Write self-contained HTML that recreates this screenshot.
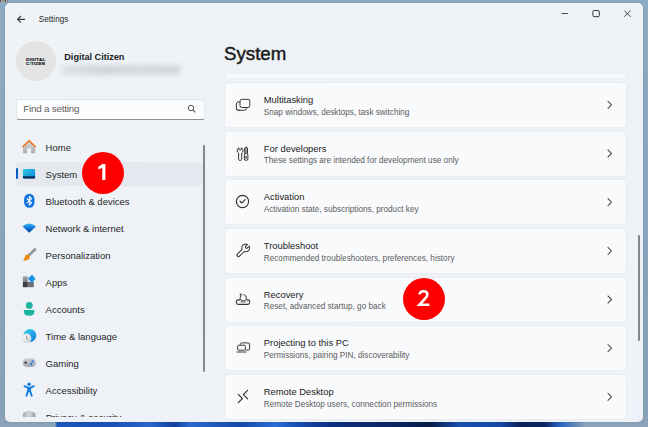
<!DOCTYPE html>
<html><head><meta charset="utf-8">
<style>
*{margin:0;padding:0;box-sizing:border-box}
html,body{width:648px;height:427px;overflow:hidden}
body{position:relative;background:linear-gradient(180deg,#8cabc3 0,#87a4bc 60%,#8aa2b6 100%);font-family:"Liberation Sans",sans-serif;color:#1b1b1b}
.abs{position:absolute}
.t{position:absolute;white-space:nowrap;line-height:1}
#wall{left:0;top:418px;width:648px;height:9px;background:linear-gradient(90deg,#8aa3b9 0,#8aa3b9 55px,#1d56bc 57px,#1a4fb4 110px,#2a66cc 150px,#123f9e 175px,#2c6ad0 190px,#1748a8 240px,#2b6fd8 275px,#184ab0 300px,#0d2f80 330px,#0a245e 400px,#081b48 430px,#1a4fb0 460px,#1748a8 500px,#0a2258 520px,#0b2660 545px,#2a63c4 560px,#5d86b8 575px,#8aa3b9 585px)}
#win{left:5px;top:3px;width:638px;height:419px;border-radius:5px;background:linear-gradient(160deg,#eef3f7 0,#eef2f7 40%,#eff3f9 100%);overflow:hidden;box-shadow:0 0 1.5px rgba(40,60,80,0.35)}
.nav{font-size:9.5px;color:#262626}
.card{position:absolute;left:224px;width:402.6px;height:46px;background:#f9fafc;border:1px solid #e9ecf1;border-radius:4px}
.ct{position:absolute;left:38.8px;top:12.1px;font-size:9.4px;line-height:1;white-space:nowrap;color:#1b1b1b}
.cs{position:absolute;left:38.8px;top:25.7px;font-size:8.2px;line-height:1;white-space:nowrap;color:#5c5c5c}
.chev{position:absolute;left:382px;top:17.5px}
.ci{position:absolute;left:-1px;top:-1px}
.badge{position:absolute;width:42.5px;height:42.5px;border-radius:50%;background:#fe0000;color:#fff;font-size:22px;font-weight:bold;text-align:center;line-height:42.5px}
</style></head><body>
<div id="wall" class="abs"></div>
<div id="win" class="abs"></div>
<div class="abs" style="left:0;top:0;width:8px;height:2px;opacity:0.75;background:linear-gradient(90deg,#6a2020 0,#6a2020 1px,#8fb0d0 1px,#8fb0d0 2px,#c08040 2px,#c08040 3px,#90b0d0 3px,#b09040 4px,#b09040 5px,#202060 5px,#202060 6px,#c0d0e0 6px,#c0d0e0 7px,#906040 7px)"></div>

<!-- title bar -->
<svg class="abs" style="left:0;top:0" width="648" height="30">
  <path d="M17.6 19.3 H25 M20.9 16 L17.6 19.3 L20.9 22.6" fill="none" stroke="#3a3a3a" stroke-width="1.15"/>
  <path d="M561.6 13.5 H568.1" stroke="#333" stroke-width="0.9"/>
  <rect x="592.9" y="10.5" width="6.4" height="6.2" rx="1.3" fill="none" stroke="#333" stroke-width="1"/>
  <path d="M624.3 10.6 L630.5 16.8 M630.5 10.6 L624.3 16.8" stroke="#333" stroke-width="0.9"/>
</svg>
<div class="t" style="left:38.8px;top:16px;font-size:8.2px;color:#2a2a2a">Settings</div>

<!-- profile -->
<div class="abs" style="left:15.8px;top:41px;width:40px;height:40px;border-radius:50%;background:#e4e4e4"></div>
<div class="t" style="left:26.1px;top:57.5px;font-size:4.4px;font-weight:bold;color:#222;letter-spacing:0.3px;-webkit-text-stroke:0.2px #222">DIGITAL</div>
<div class="t" style="left:26.1px;top:62.4px;font-size:4.4px;font-weight:bold;color:#222;letter-spacing:0.3px;-webkit-text-stroke:0.2px #222">C<span style="color:#2aa3e6;-webkit-text-stroke:0.2px #2aa3e6">I</span>TIZEN</div>
<div class="t" style="left:64.3px;top:53.3px;font-size:9.1px;font-weight:bold;color:#1b1b1b">Digital Citizen</div>
<div class="abs" style="left:62px;top:65px;width:118px;height:10px;border-radius:3px;background:linear-gradient(90deg,#dfe3e8,#d2d6db 35%,#d6dade 65%,#d3d7dc);filter:blur(2px)"></div>

<!-- search -->
<div class="abs" style="left:16.2px;top:98.8px;width:188.6px;height:21px;background:#fbfcfd;border:1px solid #e3e6ea;border-bottom:1px solid #8e8e8e;border-radius:3px"></div>
<div class="t" style="left:23.2px;top:104px;font-size:9.8px;letter-spacing:-0.2px;color:#5f5f5f">Find a setting</div>
<svg class="abs" style="left:180px;top:98px" width="24" height="22">
  <circle cx="11" cy="10" r="2.7" fill="none" stroke="#555" stroke-width="1"/>
  <path d="M13 12 L15.3 14.3" stroke="#555" stroke-width="1.1"/>
</svg>

<!-- nav selected -->
<div class="abs" style="left:16px;top:162px;width:187px;height:24px;background:#e5e9ef;border-radius:4px"></div>
<div class="abs" style="left:16px;top:168.4px;width:2.2px;height:10.5px;background:#0a5fc6;border-radius:1.1px"></div>
<!-- sidebar scrollbar -->
<div class="abs" style="left:203.1px;top:144.5px;width:2px;height:227.7px;background:#868686;border-radius:1px"></div>

<div class="t nav" style="left:45.6px;top:143.3px">Home</div>
<div class="t nav" style="left:45.6px;top:170.3px">System</div>
<div class="t nav" style="left:45.6px;top:197.3px">Bluetooth &amp; devices</div>
<div class="t nav" style="left:45.6px;top:224.3px">Network &amp; internet</div>
<div class="t nav" style="left:45.6px;top:251.3px">Personalization</div>
<div class="t nav" style="left:45.6px;top:278.3px">Apps</div>
<div class="t nav" style="left:45.6px;top:305.3px">Accounts</div>
<div class="t nav" style="left:45.6px;top:332.3px">Time &amp; language</div>
<div class="t nav" style="left:45.6px;top:359.3px">Gaming</div>
<div class="t nav" style="left:45.6px;top:386.3px">Accessibility</div>
<div class="abs" style="left:0;top:405px;width:210px;height:12px;overflow:hidden">
  <div class="t nav" style="left:45.7px;top:7.9px">Privacy &amp; security</div>
</div>

<!-- nav icons -->
<svg class="abs" style="left:0;top:130px" width="45" height="290">
  <defs>
    <linearGradient id="gHouse" x1="0" y1="0" x2="0" y2="1"><stop offset="0" stop-color="#d9dadc"/><stop offset="1" stop-color="#a9abae"/></linearGradient>
    <linearGradient id="gSys" x1="0" y1="0" x2="1" y2="1"><stop offset="0" stop-color="#30cbe6"/><stop offset="1" stop-color="#0d84d8"/></linearGradient>
    <linearGradient id="gWifi" x1="0" y1="0" x2="0" y2="1"><stop offset="0" stop-color="#3ab8f2"/><stop offset="0.5" stop-color="#1176d6"/><stop offset="1" stop-color="#0a3b97"/></linearGradient>
    <linearGradient id="gBrush" x1="0" y1="0" x2="1" y2="1"><stop offset="0" stop-color="#7d848c"/><stop offset="1" stop-color="#a6adb4"/></linearGradient>
    <linearGradient id="gPad" x1="0" y1="0" x2="0" y2="1"><stop offset="0" stop-color="#cdd0d4"/><stop offset="1" stop-color="#a3a7ac"/></linearGradient>
    <linearGradient id="gShield" x1="0" y1="0" x2="1" y2="0"><stop offset="0" stop-color="#a7abb0"/><stop offset="0.5" stop-color="#d4d7da"/><stop offset="1" stop-color="#9a9ea3"/></linearGradient>
    <linearGradient id="gApps" x1="0" y1="0" x2="0" y2="1"><stop offset="0" stop-color="#a3a8ae"/><stop offset="1" stop-color="#7b8087"/></linearGradient>
    <linearGradient id="gGlobe" x1="0" y1="0" x2="1" y2="1"><stop offset="0.25" stop-color="#30c0e8"/><stop offset="0.75" stop-color="#1a8ee0"/><stop offset="1" stop-color="#1572d4"/></linearGradient>
    <radialGradient id="gClock" cx="0.4" cy="0.35" r="0.7"><stop offset="0" stop-color="#fafafa"/><stop offset="1" stop-color="#cfd1d4"/></radialGradient>
  </defs>
  <!-- Home (page y 134..160 => local 4..30) -->
  <g transform="translate(18,4)">
    <path d="M5 12.8 L11.1 7 L17.2 12.8 L17.2 19.2 L13.1 19.2 L13.1 14.3 L9.1 14.3 L9.1 19.2 L5 19.2 Z" fill="url(#gHouse)"/>
    <path d="M4.8 12.8 L11.1 6.7 L17.4 12.8" fill="none" stroke="#f06d10" stroke-width="1.45" stroke-linejoin="round" stroke-linecap="round"/>
  </g>
  <!-- System -->
  <g transform="translate(18,31)">
    <rect x="4.9" y="7.9" width="12.2" height="9.5" rx="1.2" fill="url(#gSys)"/>
    <path d="M4.9 15.2 H17.1 V16.2 Q17.1 17.4 15.9 17.4 H6.1 Q4.9 17.4 4.9 16.2 Z" fill="#0b2c57"/>
  </g>
  <!-- Bluetooth -->
  <g transform="translate(18,58)">
    <rect x="6.1" y="5.8" width="10.4" height="14" rx="5.2" fill="#1174e0"/>
    <path d="M8.7 10.5 L13.7 14.9 L11.3 17.1 L11.3 8.5 L13.7 10.7 L8.7 15.1" fill="none" stroke="#fff" stroke-width="1.05" stroke-linejoin="round"/>
  </g>
  <!-- Network -->
  <g transform="translate(18,85)">
    <path d="M4.5 11.4 Q11.2 5.6 18 11.4 L11.2 17.8 Z" fill="url(#gWifi)"/>
  </g>
  <!-- Personalization -->
  <g transform="translate(18,112)">
    <path d="M16.9 7.4 L10.9 13.4" stroke="url(#gBrush)" stroke-width="2.8" stroke-linecap="round"/>
    <path d="M9.2 12.6 Q12.2 13.4 11.8 16.1 Q10.8 18.6 5 18.8 Q6.4 17.4 6.6 15.4 Q7.1 12.9 9.2 12.6 Z" fill="#f28a12"/>
  </g>
  <!-- Apps -->
  <g transform="translate(18,139)">
    <rect x="4.9" y="7.3" width="4.9" height="5.5" fill="url(#gApps)"/>
    <rect x="4.9" y="12.8" width="4.9" height="5.4" fill="#3b3e43"/>
    <rect x="9.8" y="12.8" width="6" height="5.4" fill="#6c7178"/>
    <path d="M13.7 6 Q14 5.8 14.3 6 L17.3 9.4 Q17.5 9.75 17.3 10.1 L14.3 13.5 Q14 13.7 13.7 13.5 L10.2 10.1 Q10 9.75 10.2 9.4 Z" fill="#1a8fe8"/>
  </g>
  <!-- Accounts -->
  <g transform="translate(18,166)">
    <circle cx="11.3" cy="9.4" r="3.4" fill="#1db3a1"/>
    <path d="M5.8 15.2 Q5.8 14 7 14 H15.3 Q16.5 14 16.5 15.2 Q16.5 19.8 11.15 19.8 Q5.8 19.8 5.8 15.2 Z" fill="#1db3a1"/>
  </g>
  <!-- Time & language -->
  <g transform="translate(18,193)">
    <circle cx="11.9" cy="12.5" r="6.4" fill="url(#gGlobe)"/>
    <circle cx="8.8" cy="15.2" r="4.6" fill="url(#gClock)"/>
    <path d="M8.5 12.6 V15.4 L10.3 16.4" fill="none" stroke="#777" stroke-width="0.8"/>
  </g>
  <!-- Gaming -->
  <g transform="translate(18,220)">
    <rect x="4.6" y="8.2" width="13.4" height="8.9" rx="4.45" fill="url(#gPad)"/>
    <path d="M7.6 11.2 V14 M6.2 12.6 H9" stroke="#44474c" stroke-width="1"/>
    <circle cx="14.6" cy="11.4" r="1.15" fill="#1a7fe2"/>
    <circle cx="13.1" cy="14" r="1.15" fill="#1a7fe2"/>
  </g>
  <!-- Accessibility -->
  <g transform="translate(18,247)">
    <circle cx="11.1" cy="7.2" r="1.8" fill="#1681e0"/>
    <path d="M6.5 9.1 L9.4 10.6 H12.8 L15.7 9.1" fill="none" stroke="#1681e0" stroke-width="1.9" stroke-linecap="round" stroke-linejoin="round"/>
    <rect x="9.2" y="10" width="3.8" height="5" rx="0.8" fill="#1681e0"/>
    <path d="M10.1 14 L8.5 18.7 M12.1 14 L13.7 18.7" fill="none" stroke="#1681e0" stroke-width="2" stroke-linecap="round"/>
  </g>
  <!-- Privacy (clipped) -->
  <g transform="translate(18,274)">
    <path d="M5 8.9 L11.1 6.5 L17.3 8.9 V13 H5 Z" fill="url(#gShield)"/>
  </g>
</svg>

<!-- main title -->
<div class="t" style="left:224px;top:44.9px;font-size:18.7px;color:#1a1a1a;-webkit-text-stroke:0.45px #1a1a1a">System</div>

<!-- cards clip -->
<div class="abs" style="left:216px;top:74px;width:420px;height:348px;overflow:hidden">
  <div class="card" style="left:8px;top:-40.8px"></div>
</div>

<div class="card" style="top:82px">
  <svg class="ci" width="40" height="45" viewBox="224 82 40 45">
    <path d="M240.5 110.3 H238.4 Q236.4 110.3 236.4 108.3 V104 Q236.4 102 238.4 102 H240" fill="none" stroke="#3a3a3a" stroke-width="1"/>
    <path d="M236.4 108 Q236.4 110.3 238.6 110.3 H244.4 Q246.4 110.3 246.4 108.3 V107.5" fill="none" stroke="#3a3a3a" stroke-width="1"/>
    <rect x="240" y="99.3" width="9.8" height="8.2" rx="1.8" fill="none" stroke="#3a3a3a" stroke-width="1"/>
  </svg>
  <div class="ct">Multitasking</div><div class="cs">Snap windows, desktops, task switching</div>
</div>
<div class="card" style="top:130.67px">
  <svg class="ci" width="40" height="45" viewBox="224 130.7 40 45">
    <g transform="translate(230,140)">
      <path d="M8.9 7.5 V8.7 Q8.9 9.9 10.1 9.9 Q11.3 9.9 11.3 8.7 V7.5 Q13.1 8.3 13.1 10.2 Q13.1 11.9 11.7 12.7 V19.2 Q11.7 20.1 10.2 20.1 Q8.6 20.1 8.6 19.2 V12.7 Q7.1 11.9 7.1 10.2 Q7.1 8.3 8.9 7.5 Z" fill="none" stroke="#333" stroke-width="1" stroke-linejoin="round"/>
      <path d="M14.7 13.3 V8.4 Q14.7 6.9 16.1 6.9 Q17.5 6.9 17.5 8.4 V13.3" fill="#9a9a9a" stroke="#333" stroke-width="1"/>
      <rect x="14.4" y="13.3" width="3.5" height="6.8" rx="1.5" fill="none" stroke="#333" stroke-width="1"/>
      <rect x="15.5" y="15.7" width="1.3" height="2.6" rx="0.6" fill="none" stroke="#444" stroke-width="0.8"/>
    </g>
  </svg>
  <div class="ct">For developers</div><div class="cs">These settings are intended for development use only</div>
</div>
<div class="card" style="top:179.33px">
  <svg class="ci" width="40" height="45" viewBox="224 179.3 40 45">
    <circle cx="242.5" cy="201.8" r="6.1" fill="none" stroke="#333" stroke-width="1.15"/>
    <path d="M240 201.5 L241.6 203.3 L245.2 200" fill="none" stroke="#333" stroke-width="1.15" stroke-linecap="round" stroke-linejoin="round"/>
  </svg>
  <div class="ct">Activation</div><div class="cs">Activation state, subscriptions, product key</div>
</div>
<div class="card" style="top:228px">
  <svg class="ci" width="40" height="45" viewBox="224 228 40 45">
    <g transform="translate(245.7,247.9) rotate(45)">
      <path d="M-1.2 -3.7 A3.9 3.9 0 0 0 -1.45 3.62 L-1.45 10.2 A1.45 1.45 0 0 0 1.45 10.2 L1.45 3.62 A3.9 3.9 0 0 0 1.2 -3.7 L1.2 -1.3 A1.2 1.2 0 0 1 -1.2 -1.3 Z" fill="none" stroke="#333" stroke-width="1" stroke-linejoin="round"/>
    </g>
  </svg>
  <div class="ct">Troubleshoot</div><div class="cs">Recommended troubleshooters, preferences, history</div>
</div>
<div class="card" style="top:276.67px">
  <svg class="ci" width="40" height="45" viewBox="224 276.7 40 45">
    <g transform="translate(230,286)">
      <path d="M10.3 13.6 H8.2 Q6.4 13.6 6.4 15.4 V16.3 Q6.4 18.1 8.2 18.1 H17.8 Q19.6 18.1 19.6 16.3 V15.4 Q19.6 13.6 17.8 13.6 H16.3" fill="none" stroke="#333" stroke-width="1.1"/>
      <path d="M10.8 9.6 A3.1 3.1 0 1 0 13.3 8.4" fill="none" stroke="#333" stroke-width="1"/>
      <path d="M9.3 8.4 L11.4 6.6 L11.6 10 Z" fill="#333"/>
      <path d="M10.6 15.3 Q13.2 16.3 15.8 15.3" fill="none" stroke="#555" stroke-width="0.9"/>
      <circle cx="17.2" cy="15.4" r="0.45" fill="#555"/>
    </g>
  </svg>
  <div class="ct">Recovery</div><div class="cs">Reset, advanced startup, go back</div>
</div>
<div class="card" style="top:325.33px">
  <svg class="ci" width="40" height="45" viewBox="224 325.3 40 45">
    <path d="M240.5 345 V344.4 Q240.5 343.2 241.7 343.2 H248.3 Q249.6 343.2 249.6 344.4 V349.2 Q249.6 350.4 248.3 350.4 H246" fill="none" stroke="#3a3a3a" stroke-width="1"/>
    <rect x="237.6" y="345.5" width="7.8" height="5" rx="1.2" fill="none" stroke="#3a3a3a" stroke-width="1"/>
    <path d="M236.6 352.3 H246.4" stroke="#3a3a3a" stroke-width="1"/>
  </svg>
  <div class="ct">Projecting to this PC</div><div class="cs">Permissions, pairing PIN, discoverability</div>
</div>
<div class="card" style="top:374px">
  <svg class="ci" width="40" height="45" viewBox="224 374 40 45">
    <path d="M247.6 390.4 L243.4 394.6 L247.6 398.8" fill="none" stroke="#333" stroke-width="1.2" stroke-linecap="round"/>
    <path d="M238.3 394.3 L242.4 398.5 L238.3 402.7" fill="none" stroke="#333" stroke-width="1.2" stroke-linecap="round"/>
  </svg>
  <div class="ct">Remote Desktop</div><div class="cs">Remote Desktop users, connection permissions</div>
</div>

<!-- chevrons -->
<svg class="abs" style="left:600px;top:80px" width="20" height="340">
  <g fill="none" stroke="#555" stroke-width="1.1" stroke-linecap="round" stroke-linejoin="round">
    <path d="M8 21.3 L11.5 24.8 L8 28.3"/>
    <path d="M8 70 L11.5 73.5 L8 77"/>
    <path d="M8 118.7 L11.5 122.2 L8 125.7"/>
    <path d="M8 167.3 L11.5 170.8 L8 174.3"/>
    <path d="M8 216 L11.5 219.5 L8 223"/>
    <path d="M8 264.7 L11.5 268.2 L8 271.7"/>
    <path d="M8 313.3 L11.5 316.8 L8 320.3"/>
  </g>
</svg>

<!-- main scrollbar -->
<div class="abs" style="left:638.4px;top:235.2px;width:1.9px;height:106.3px;background:#868686;border-radius:1px"></div>

<!-- badges -->
<div class="badge" style="left:81.8px;top:151.6px"></div>
<div class="badge" style="left:402.8px;top:277.7px"></div>
<svg class="abs" style="left:0;top:0" width="648" height="427">
  <path d="M102.2 163.9 H105.4 V179.9 H102.2 V167.4 Q100.6 168.7 98.3 169.3 V166.5 Q100.8 165.6 102.2 163.9 Z" fill="#fff"/>
  <path d="M419.5 294.4 Q420 291.2 423.6 291.2 Q427.4 291.2 427.4 294.4 Q427.4 296.3 425 298.7 L419.5 304.7 H429.4" fill="none" stroke="#fff" stroke-width="2.6"/>
</svg>
</body></html>
